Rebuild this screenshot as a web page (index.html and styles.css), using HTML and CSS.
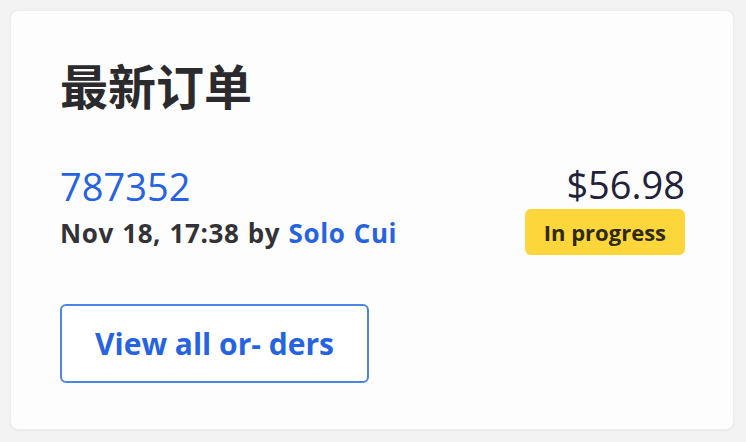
FILE: index.html
```html
<!DOCTYPE html>
<html>
<head>
	<meta charset="utf-8">
	<title>最新订单</title>
	<link rel="stylesheet" href="styles.css">
</head>
<body>
	<div class="card">
		<h1 class="title">最新订单</h1>
		<div class="order">
			<div class="order-info">
				<a class="order-id" href="#">787352</a>
				<div class="order-meta">Nov 18, 17:38 by <a href="#">Solo Cui</a></div>
			</div>
			<div class="order-side">
				<div class="price">$56.98</div>
				<span class="badge">In progress</span>
			</div>
		</div>
		<button class="all-btn">View all or- ders</button>
	</div>
</body>
</html>
```

FILE: styles.css
```css
body {
	margin: 0;
	background: #f3f3f4;
	font-family: "Open Sans", "Noto Sans CJK SC", sans-serif;
	padding: 10px 12px 10px 10px;
}
.card {
	background: #fdfdfd;
	border: 1px solid #ececee;
	border-radius: 8px;
	box-shadow: 0 1px 3px rgba(0, 0, 0, 0.04);
	padding: 45px 48px 48px 49px;
	height: 420px;
	box-sizing: border-box;
}
.title {
	margin: 0 0 46px 0;
	font-family: "Noto Sans CJK SC", sans-serif;
	font-size: 48px;
	font-weight: 700;
	line-height: 1.2;
	color: #2b2a2c;
}
.order {
	display: flex;
	justify-content: space-between;
	align-items: flex-start;
}
.order-info {
	display: flex;
	flex-direction: column;
	padding-top: 2px;
}
.order-id {
	color: #2563e0;
	text-decoration: none;
	font-size: 38px;
	line-height: 48px;
}
.order-meta {
	margin-top: 5px;
	font-size: 26px;
	font-weight: 700;
	color: #333236;
	line-height: 36px;
	letter-spacing: 0.6px;
	word-spacing: 1px;
}
.order-meta a {
	color: #2563e0;
	text-decoration: none;
}
.order-side {
	display: flex;
	flex-direction: column;
	align-items: flex-end;
}
.price {
	font-size: 38px;
	color: #22213a;
	line-height: 48px;
}
.badge {
	margin-top: 1px;
	background: #fdd63b;
	color: #2e2a10;
	font-size: 22px;
	font-weight: 700;
	border-radius: 6px;
	padding: 6px 19px;
	line-height: 34px;
}
.all-btn {
	margin-top: 49px;
	background: #fff;
	border: 2px solid #4c86e2;
	border-radius: 6px;
	color: #2563e0;
	font-family: "Open Sans", sans-serif;
	font-size: 30px;
	font-weight: 700;
	padding: 0 33px;
	height: 79px;
}
```
